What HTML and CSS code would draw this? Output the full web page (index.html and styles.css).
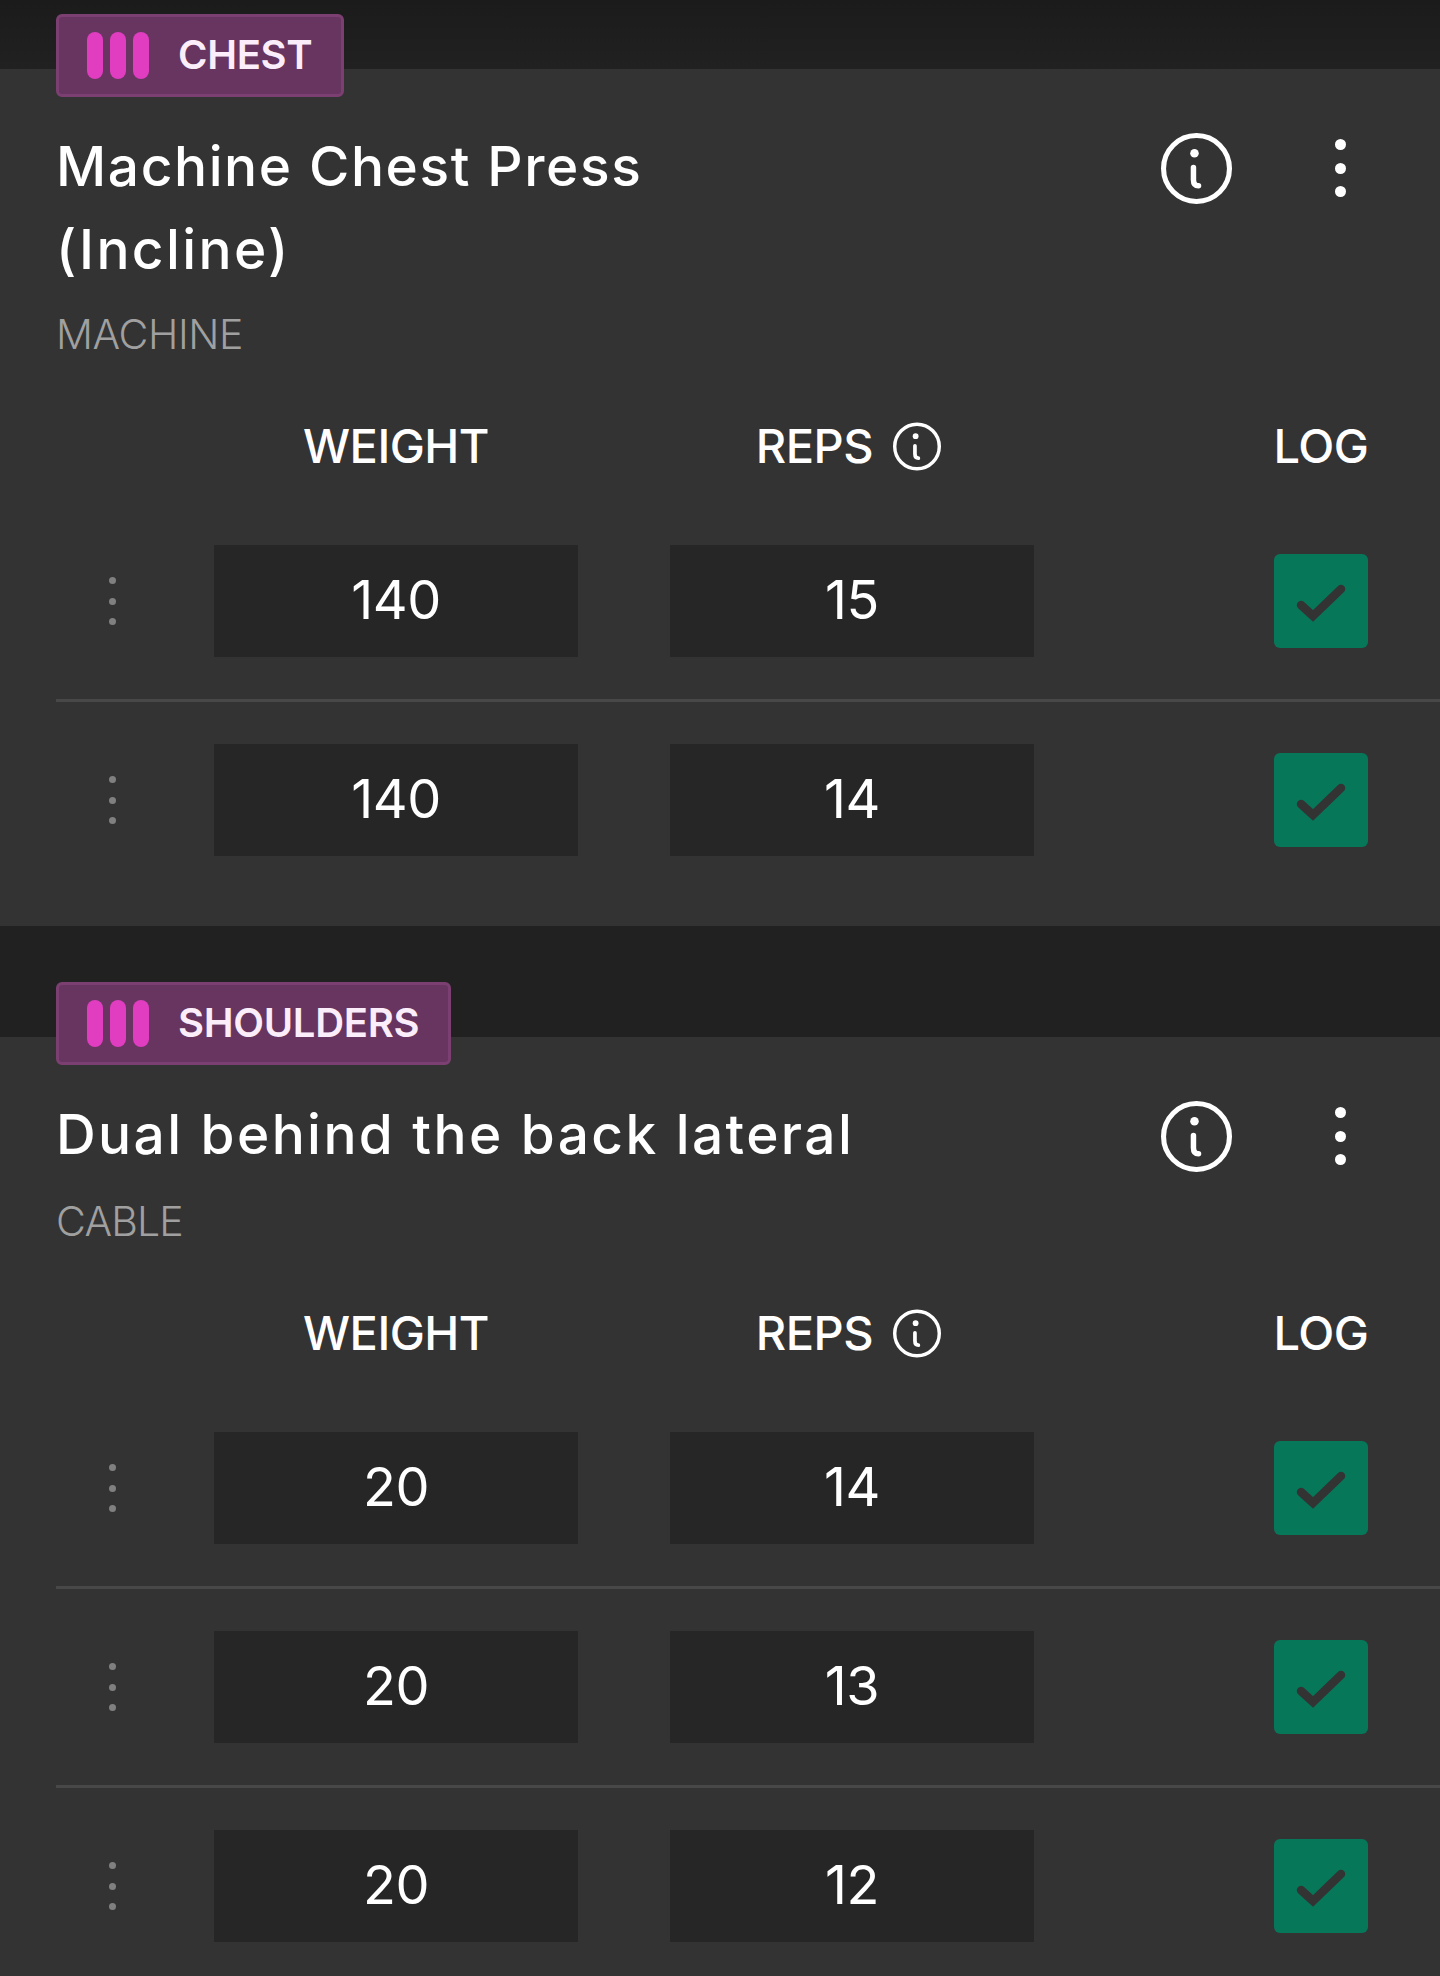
FILE: index.html
```html
<!DOCTYPE html>
<html lang="en">
<head>
    <meta charset="UTF-8">
    <meta name="viewport" content="width=device-width, initial-scale=1.0">
    <title>Workout</title>
    <link rel="stylesheet" href="styles.css">
</head>
<body>
    <svg class="defs" width="0" height="0">
        <symbol id="info" viewBox="0 0 70 70">
            <circle cx="35" cy="35" r="32.5" fill="none" stroke="currentColor" stroke-width="5"/>
            <circle cx="33" cy="20" r="4.2" fill="currentColor"/>
            <path d="M32 34V46Q32 52 37 52" fill="none" stroke="currentColor" stroke-width="5.4" stroke-linecap="round"/>
        </symbol>
        <symbol id="check" viewBox="0 0 94 94">
            <path d="M27 51L39 62L67 35" fill="none" stroke="currentColor" stroke-width="8.5" stroke-linecap="round" stroke-linejoin="miter"/>
        </symbol>
    </svg>

    <section class="exercise first">
        <div class="badge"><span class="bars"><i></i><i></i><i></i></span>CHEST</div>
        <div class="title-row">
            <h2>Machine Chest Press<br><span class="wide">(Incline)</span></h2>
            <svg class="info-big"><use href="#info"/></svg>
            <div class="menu"><i></i><i></i><i></i></div>
        </div>
        <div class="kind">MACHINE</div>
        <div class="head">
            <div class="handle"></div>
            <div class="cell">WEIGHT</div>
            <div class="cell">REPS <svg class="info-small"><use href="#info"/></svg></div>
            <div class="log">LOG</div>
        </div>
        <div class="row">
            <div class="handle"><i></i><i></i><i></i></div>
            <div class="cell value">140</div>
            <div class="cell value">15</div>
            <svg class="tick"><use href="#check"/></svg>
        </div>
        <div class="row">
            <div class="handle"><i></i><i></i><i></i></div>
            <div class="cell value">140</div>
            <div class="cell value">14</div>
            <svg class="tick"><use href="#check"/></svg>
        </div>
    </section>

    <section class="exercise">
        <div class="badge"><span class="bars"><i></i><i></i><i></i></span>SHOULDERS</div>
        <div class="title-row">
            <h2><span class="wide">Dual behind the back lateral</span></h2>
            <svg class="info-big"><use href="#info"/></svg>
            <div class="menu"><i></i><i></i><i></i></div>
        </div>
        <div class="kind">CABLE</div>
        <div class="head">
            <div class="handle"></div>
            <div class="cell">WEIGHT</div>
            <div class="cell">REPS <svg class="info-small"><use href="#info"/></svg></div>
            <div class="log">LOG</div>
        </div>
        <div class="row">
            <div class="handle"><i></i><i></i><i></i></div>
            <div class="cell value">20</div>
            <div class="cell value">14</div>
            <svg class="tick"><use href="#check"/></svg>
        </div>
        <div class="row">
            <div class="handle"><i></i><i></i><i></i></div>
            <div class="cell value">20</div>
            <div class="cell value">13</div>
            <svg class="tick"><use href="#check"/></svg>
        </div>
        <div class="row">
            <div class="handle"><i></i><i></i><i></i></div>
            <div class="cell value">20</div>
            <div class="cell value">12</div>
            <svg class="tick"><use href="#check"/></svg>
        </div>
    </section>
</body>
</html>
```

FILE: styles.css
```css
html {
    background-color: #212121;
}
body {
    margin: 0;
    height: 1976px;
    overflow: hidden;
    background: linear-gradient(#1b1b1b, #212121 69px);
    font-family: Inter, "Noto Sans", sans-serif;
    color: #fff;
}
.defs {
    display: block;
}
.exercise {
    display: flow-root;
    margin-top: 111px;
    padding: 0 0 28px 56px;
    background-color: #333;
}
.exercise.first {
    margin-top: 69px;
}
.badge {
    display: flex;
    align-items: center;
    box-sizing: border-box;
    width: fit-content;
    height: 83px;
    margin-top: -55px;
    padding: 0 29px 2px 28px;
    background-color: #67355f;
    border: 3px solid #7c3f71;
    border-radius: 6px;
    font-size: 40px;
    font-weight: 600;
    letter-spacing: -0.3px;
    color: #fbeefa;
}
.bars {
    display: flex;
    gap: 7px;
    margin: 2px 29px 0 0;
}
.bars i {
    width: 16px;
    height: 47px;
    border-radius: 8px;
    background-color: #e03dc0;
}
.title-row {
    display: flex;
    align-items: flex-start;
    margin-top: 27px;
}
h2 {
    flex: 1;
    margin: 1px 0 0;
    font-size: 55px;
    font-weight: 500;
    line-height: 83px;
    letter-spacing: 1.6px;
}
.wide {
    letter-spacing: 2.4px;
}
.info-big {
    width: 71px;
    height: 71px;
    margin-top: 9px;
    color: #fff;
}
.menu {
    display: flex;
    flex-direction: column;
    gap: 12.5px;
    width: 11px;
    margin: 15px 94px 0 103px;
}
.menu i {
    height: 11px;
    border-radius: 50%;
    background-color: #fff;
}
.kind {
    margin-top: 18px;
    font-size: 41px;
    font-weight: 300;
    line-height: 50px;
    letter-spacing: -0.4px;
    color: #a0a0a0;
}
.exercise + .exercise .kind {
    margin-top: 20px;
    letter-spacing: -0.8px;
}
.head {
    display: flex;
    align-items: center;
    height: 60px;
    margin-top: 56px;
    padding-right: 72px;
    font-size: 47px;
    font-weight: 500;
    letter-spacing: -0.5px;
}
.handle {
    display: flex;
    flex-direction: column;
    gap: 13.5px;
    box-sizing: border-box;
    width: 158px;
    padding-left: 53px;
}
.handle i {
    width: 7px;
    height: 7px;
    border-radius: 50%;
    background-color: #808080;
}
.cell {
    display: flex;
    align-items: center;
    justify-content: center;
    gap: 20px;
    box-sizing: border-box;
    width: 364px;
}
.cell + .cell {
    margin-left: 92px;
}
.head .cell + .cell {
    padding-right: 7px;
}
.info-small {
    width: 48px;
    height: 49px;
    margin-top: 2px;
}
.log {
    width: 94px;
    margin-left: auto;
    display: flex;
    justify-content: center;
    white-space: nowrap;
}
.row {
    display: flex;
    align-items: center;
    padding: 42px 72px 42px 0;
    border-bottom: 3px solid #484848;
}
.head + .row {
    margin-top: 28px;
}
.row:last-child {
    border-bottom: none;
}
.value {
    height: 112px;
    padding-bottom: 3px;
    background-color: #262626;
    font-size: 54px;
    font-weight: 400;
    letter-spacing: -0.5px;
}
.tick {
    width: 94px;
    height: 94px;
    margin-left: auto;
    border-radius: 6px;
    background-color: #07775a;
    color: #333;
}
```
